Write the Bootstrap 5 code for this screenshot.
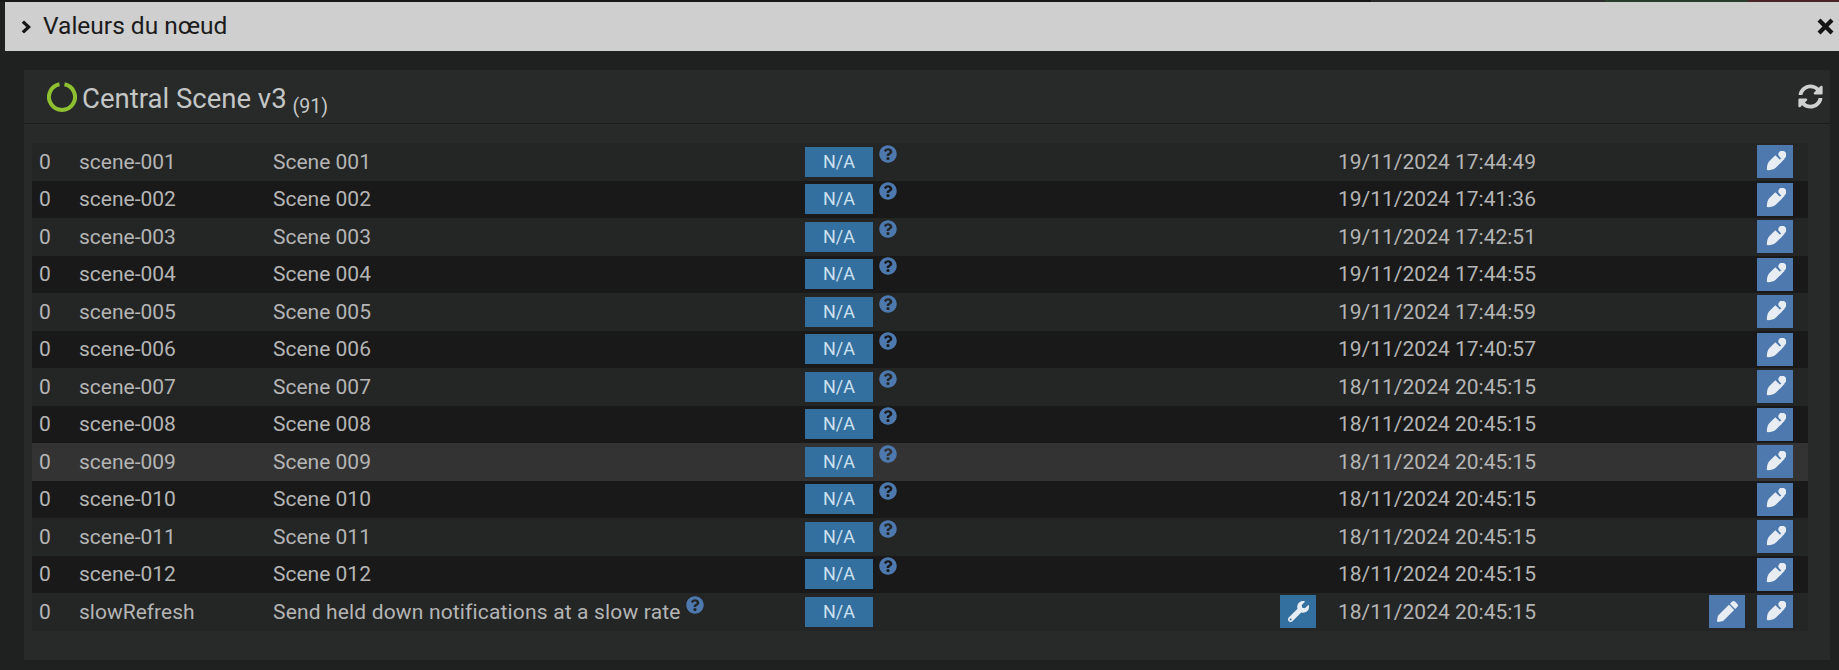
<!DOCTYPE html>
<html lang="fr"><head><meta charset="utf-8"><title>Valeurs du nœud</title>
<link href="https://cdn.jsdelivr.net/npm/bootstrap@5.3.0/dist/css/bootstrap.min.css" rel="stylesheet">
<style>
html,body{height:670px;overflow:hidden}
body{background:#1f2020;font-family:Roboto,sans-serif;color:#b5b5b5;font-size:21px}
.strip{height:2px;background:#171717}
.seg-a{margin-left:1371px;width:234px;background:#2a2a2a}
.seg-b{width:143px;background:#2a3d2c}
.seg-c{width:91px;background:#4a2327}
.dlg{margin-left:5px}
.dlg-head{height:49px;background:#cfcfcf;color:#1b1b1b;font-size:24.5px;padding-left:15px}
.dlg-head svg{fill:#151515}
.dlg-title{margin-left:9px}
.dlg-close{margin-left:auto;margin-right:4px}
.panel-box{margin:19px 9px 0 19px;height:590px;background:#282a2a}
.panel-top{height:54px;border-bottom:1px solid #1b1c1c;padding:0 7px 0 23px}
.ring{width:30px;height:30px;margin-right:5px}
.pname{font-size:27.5px;color:#c4c6c6;margin-top:5px}
.pcount{font-size:19.5px;margin:0 0 2px 6px;color:#c4c6c6;align-self:flex-end}
.rows{margin:19px 22px 0 8px}
.vrow{height:37.5px;background:#242525}
.vrow:nth-child(even){background:#191919}
.vrow.hot{background:#333}
.c-id{width:47px;padding:1px 0 0 7px}
.c-log{width:194px;padding-top:1px}
.c-name{width:532px;padding-top:1px}
.c-val{width:533px}
.c-date{width:419px;padding-top:1px}
.c-date.short{width:371px}
.slow-txt{letter-spacing:.16px}
.btn.nval{width:68px;height:30px;padding:0;background:#33709f;border:0;border-radius:0;color:#cde0f0;font-size:18px;line-height:30px}
.btn.act{width:36px;height:33px;padding:0;background:#4e79ae;border:0;border-radius:0;display:inline-flex;align-items:center;justify-content:center}
.btn.act svg{fill:#e8edf3}
.btn.wr{background:#33709f;margin-right:22px}
.btn.gap-pin{margin-left:12px}
.hlp{fill:#4e79ae;margin-left:6px;align-self:flex-start;margin-top:-2px}
.hlp2{fill:#4e79ae;margin:-14px 0 0 5px}
</style></head>
<body>
<svg width="0" height="0" class="d-block">
<defs>
<symbol id="q" viewBox="0 0 512 512"><path d="M504 256c0 136.997-111.043 248-248 248S8 392.997 8 256C8 119.083 119.043 8 256 8s248 111.083 248 248zM262.655 90c-54.497 0-89.255 22.957-116.549 63.758-3.536 5.286-2.353 12.415 2.715 16.258l34.699 26.31c5.205 3.947 12.621 3.008 16.665-2.122 17.864-22.658 30.113-35.797 57.303-35.797 20.429 0 45.698 13.148 45.698 32.958 0 14.976-12.363 22.667-32.534 33.976C247.128 238.528 216 254.941 216 296v4c0 6.627 5.373 12 12 12h56c6.627 0 12-5.373 12-12v-1.333c0-28.462 83.186-29.647 83.186-106.667 0-58.002-60.165-102-116.531-102zM256 338c-25.365 0-46 20.635-46 46 0 25.364 20.635 46 46 46s46-20.636 46-46c0-25.365-20.635-46-46-46z"/></symbol>
<symbol id="tip" viewBox="0 0 24 24"><g transform="rotate(45 12 12)"><rect x="7.500" y="-3.500" width="9" height="8" rx="4"/><rect x="14" y="2" width="3" height="7"/><path d="M7 6.500h10v9c0 3-2.200 6.500-5 9-2.800-2.500-5-6-5-9z"/></g></symbol>
<symbol id="pen" viewBox="0 0 512 512"><path d="M497.9 142.1l-46.1 46.1c-4.700 4.700-12.300 4.700-17 0l-111-111c-4.700-4.700-4.700-12.300 0-17l46.100-46.100c18.700-18.700 49.100-18.700 67.900 0l60.100 60.100c18.800 18.700 18.800 49.100 0 67.900zM284.200 99.800L21.600 362.400.4 483.900c-2.900 16.400 11.400 30.600 27.800 27.800l121.500-21.300 262.600-262.600c4.700-4.700 4.700-12.300 0-17l-111-111c-4.800-4.700-12.400-4.700-17.100 0z"/></symbol>
</defs></svg>
<div class="strip d-flex"><div class="seg-a"></div><div class="seg-b"></div><div class="seg-c"></div></div>
<div class="dlg">
<div class="dlg-head d-flex align-items-center">
<svg width="14" height="16" viewBox="0 0 14 16"><path d="M4 1.500 11 8l-7 6.500-2.300-2.300L6.300 8 1.700 3.800z"/></svg>
<span class="dlg-title">Valeurs du nœud</span>
<svg class="dlg-close" width="19" height="19" viewBox="0 0 19 19"><path d="M1.500 4.500 4.500 1.500 9.500 6.500l5-5 3 3-5 5 5 5-3 3-5-5-5 5-3-3 5-5z"/></svg>
</div>
<div class="panel-box">
<div class="panel-top d-flex align-items-center">
<svg class="ring" viewBox="0 0 30 30"><path d="M12.500 2.240A13 13 0 1 0 17.500 2.240" fill="none" stroke="#8fc031" stroke-width="4"/></svg>
<span class="pname">Central Scene v3</span><span class="pcount">(91)</span>
<svg class="ms-auto" width="25" height="25" viewBox="0 0 512 512" fill="#cfd1d1"><path d="M370.720 133.280C339.458 104.008 298.888 87.962 255.848 88c-77.458.068-144.328 53.178-162.791 126.850-1.344 5.363-6.122 9.150-11.651 9.150H24.103c-7.498 0-13.194-6.807-11.807-14.176C33.933 94.924 134.813 8 256 8c66.448 0 126.791 26.136 171.315 68.685L463.030 40.970C478.149 25.851 504 36.559 504 57.941V192c0 13.255-10.745 24-24 24H345.941c-21.382 0-32.090-25.851-16.971-40.971l41.750-41.749zM32 296h134.059c21.382 0 32.090 25.851 16.971 40.971l-41.750 41.750c31.262 29.273 71.835 45.319 114.876 45.280 77.418-.07 144.315-53.144 162.787-126.849 1.344-5.363 6.122-9.150 11.651-9.150h57.304c7.498 0 13.194 6.807 11.807 14.176C478.067 417.076 377.187 504 256 504c-66.448 0-126.791-26.136-171.315-68.685L48.970 471.030C33.851 486.149 8 475.441 8 454.059V320c0-13.255 10.745-24 24-24z"/></svg>
</div>
<div class="rows" id="rows">
<div class="vrow d-flex align-items-center"><div class="c-id">0</div><div class="c-log">scene-001</div><div class="c-name">Scene 001</div><div class="c-val d-flex"><button class="btn nval">N/A</button><svg class="hlp" width="18" height="18"><use href="#q"/></svg></div><div class="c-date">19/11/2024 17:44:49</div><button class="btn act"><svg width="22" height="22"><use href="#tip"/></svg></button></div>
<div class="vrow d-flex align-items-center"><div class="c-id">0</div><div class="c-log">scene-002</div><div class="c-name">Scene 002</div><div class="c-val d-flex"><button class="btn nval">N/A</button><svg class="hlp" width="18" height="18"><use href="#q"/></svg></div><div class="c-date">19/11/2024 17:41:36</div><button class="btn act"><svg width="22" height="22"><use href="#tip"/></svg></button></div>
<div class="vrow d-flex align-items-center"><div class="c-id">0</div><div class="c-log">scene-003</div><div class="c-name">Scene 003</div><div class="c-val d-flex"><button class="btn nval">N/A</button><svg class="hlp" width="18" height="18"><use href="#q"/></svg></div><div class="c-date">19/11/2024 17:42:51</div><button class="btn act"><svg width="22" height="22"><use href="#tip"/></svg></button></div>
<div class="vrow d-flex align-items-center"><div class="c-id">0</div><div class="c-log">scene-004</div><div class="c-name">Scene 004</div><div class="c-val d-flex"><button class="btn nval">N/A</button><svg class="hlp" width="18" height="18"><use href="#q"/></svg></div><div class="c-date">19/11/2024 17:44:55</div><button class="btn act"><svg width="22" height="22"><use href="#tip"/></svg></button></div>
<div class="vrow d-flex align-items-center"><div class="c-id">0</div><div class="c-log">scene-005</div><div class="c-name">Scene 005</div><div class="c-val d-flex"><button class="btn nval">N/A</button><svg class="hlp" width="18" height="18"><use href="#q"/></svg></div><div class="c-date">19/11/2024 17:44:59</div><button class="btn act"><svg width="22" height="22"><use href="#tip"/></svg></button></div>
<div class="vrow d-flex align-items-center"><div class="c-id">0</div><div class="c-log">scene-006</div><div class="c-name">Scene 006</div><div class="c-val d-flex"><button class="btn nval">N/A</button><svg class="hlp" width="18" height="18"><use href="#q"/></svg></div><div class="c-date">19/11/2024 17:40:57</div><button class="btn act"><svg width="22" height="22"><use href="#tip"/></svg></button></div>
<div class="vrow d-flex align-items-center"><div class="c-id">0</div><div class="c-log">scene-007</div><div class="c-name">Scene 007</div><div class="c-val d-flex"><button class="btn nval">N/A</button><svg class="hlp" width="18" height="18"><use href="#q"/></svg></div><div class="c-date">18/11/2024 20:45:15</div><button class="btn act"><svg width="22" height="22"><use href="#tip"/></svg></button></div>
<div class="vrow d-flex align-items-center"><div class="c-id">0</div><div class="c-log">scene-008</div><div class="c-name">Scene 008</div><div class="c-val d-flex"><button class="btn nval">N/A</button><svg class="hlp" width="18" height="18"><use href="#q"/></svg></div><div class="c-date">18/11/2024 20:45:15</div><button class="btn act"><svg width="22" height="22"><use href="#tip"/></svg></button></div>
<div class="vrow hot d-flex align-items-center"><div class="c-id">0</div><div class="c-log">scene-009</div><div class="c-name">Scene 009</div><div class="c-val d-flex"><button class="btn nval">N/A</button><svg class="hlp" width="18" height="18"><use href="#q"/></svg></div><div class="c-date">18/11/2024 20:45:15</div><button class="btn act"><svg width="22" height="22"><use href="#tip"/></svg></button></div>
<div class="vrow d-flex align-items-center"><div class="c-id">0</div><div class="c-log">scene-010</div><div class="c-name">Scene 010</div><div class="c-val d-flex"><button class="btn nval">N/A</button><svg class="hlp" width="18" height="18"><use href="#q"/></svg></div><div class="c-date">18/11/2024 20:45:15</div><button class="btn act"><svg width="22" height="22"><use href="#tip"/></svg></button></div>
<div class="vrow d-flex align-items-center"><div class="c-id">0</div><div class="c-log">scene-011</div><div class="c-name">Scene 011</div><div class="c-val d-flex"><button class="btn nval">N/A</button><svg class="hlp" width="18" height="18"><use href="#q"/></svg></div><div class="c-date">18/11/2024 20:45:15</div><button class="btn act"><svg width="22" height="22"><use href="#tip"/></svg></button></div>
<div class="vrow d-flex align-items-center"><div class="c-id">0</div><div class="c-log">scene-012</div><div class="c-name">Scene 012</div><div class="c-val d-flex"><button class="btn nval">N/A</button><svg class="hlp" width="18" height="18"><use href="#q"/></svg></div><div class="c-date">18/11/2024 20:45:15</div><button class="btn act"><svg width="22" height="22"><use href="#tip"/></svg></button></div>
<div class="vrow d-flex align-items-center"><div class="c-id">0</div><div class="c-log">slowRefresh</div><div class="c-name d-flex align-items-center"><span class="slow-txt">Send held down notifications at a slow rate</span><svg class="hlp2" width="18" height="18"><use href="#q"/></svg></div><div class="c-val d-flex align-items-center"><button class="btn nval">N/A</button><button class="btn act wr ms-auto"><svg width="21" height="21" viewBox="0 0 512 512"><path d="M507.730 109.100c-2.240-9.030-13.540-12.090-20.120-5.510l-74.360 74.360-67.880-11.310-11.310-67.880 74.360-74.360c6.620-6.620 3.430-17.900-5.660-20.160-47.380-11.740-99.550.91-136.580 37.930-39.640 39.640-50.550 97.100-34.050 147.200L18.740 402.760c-24.990 24.990-24.990 65.510 0 90.500 24.990 24.990 65.510 24.990 90.500 0l213.210-213.210c50.120 16.710 107.470 5.680 147.370-34.220 37.070-37.070 49.700-89.320 37.910-136.730zM64 472c-13.250 0-24-10.750-24-24 0-13.260 10.750-24 24-24s24 10.740 24 24c0 13.250-10.750 24-24 24z"/></svg></button></div><div class="c-date short">18/11/2024 20:45:15</div><button class="btn act"><svg width="21" height="21"><use href="#pen"/></svg></button><button class="btn act gap-pin"><svg width="22" height="22"><use href="#tip"/></svg></button></div>
</div>
</div>
</div>
</body></html>
